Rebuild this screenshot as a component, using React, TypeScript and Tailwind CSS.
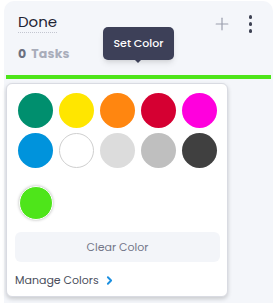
import { ChevronRight, Plus } from 'lucide-react'

const presetColors = [
  '#008f6e', '#ffe600', '#ff8610', '#d50032', '#ff00dd',
  '#0093dc', '#ffffff', '#dcdcdc', '#bfbfbf', '#404040',
]

const App = () => {
  return (
    <div
      className="relative w-[279px] h-[303px] bg-white pl-[4px] pr-[6px] pt-[1px] overflow-hidden"
      style={{ fontFamily: 'Poppins, Inter, "Noto Sans", sans-serif' }}
    >
      <div className="h-[310px] bg-[#f4f6fa] rounded-t-[10px] flex flex-col">
        {/* Header */}
        <div className="flex items-start justify-between pl-[14px] pr-[21px] pt-[11px] h-[74px]">
          <div className="flex flex-col">
            <span className="text-[15px] leading-[20px] text-[#1f2433] border-b border-dotted border-[#c3c6d0] w-fit">
              Done
            </span>
            <span className="mt-[14px] text-[12.5px] leading-[14px] font-bold text-[#a9adba] tracking-[0.2px]">
              <span className="text-[#6c7080] mr-[2px]">0</span> Tasks
            </span>
          </div>
          <div className="flex items-center gap-[17px] pt-[2px]">
            <Plus className="w-[20px] h-[20px] text-[#9a9eac]" strokeWidth={1.4} />
            <div className="flex flex-col gap-[3.5px]">
              <span className="w-[3.5px] h-[3.5px] rounded-full bg-[#3e4253]" />
              <span className="w-[3.5px] h-[3.5px] rounded-full bg-[#3e4253]" />
              <span className="w-[3.5px] h-[3.5px] rounded-full bg-[#3e4253]" />
            </div>
          </div>
        </div>

        {/* Color bar */}
        <div className="mx-[2px] h-[4px] bg-[#4ee51a]" />

        {/* Color picker */}
        <div className="ml-[2px] mt-[4px] w-[222px] h-[214px] bg-white rounded-[6px] border border-[#d9dbe2] shadow-[0_2px_4px_rgba(0,0,0,0.18)] flex flex-col pl-[11px] pr-[7px] pt-[9px]">
          <div className="grid grid-cols-5 gap-x-[6px] gap-y-[5px] w-[199px]">
            {presetColors.map((c) => (
              <span
                key={c}
                className={`w-[35px] h-[35px] rounded-full ${c === '#ffffff' ? 'border border-[#cfcfcf]' : ''}`}
                style={{ backgroundColor: c }}
              />
            ))}
          </div>
          <div className="mt-[18px] pl-[1px]">
            <span className="block w-[34px] h-[34px] rounded-full bg-[#4ee51a] border-[1.5px] border-white shadow-[0_0_3px_rgba(0,0,0,0.3)]" />
          </div>
          <div className="mt-[12px] -ml-[3px] h-[30px] rounded-[6px] bg-[#f3f5f9] flex items-center justify-center text-[11px] text-[#737789]">
            Clear Color
          </div>
          <div className="mt-[10px] -ml-[3px] flex items-center gap-[4px] text-[11px] text-[#4a4e5c]">
            Manage Colors
            <ChevronRight className="w-[13px] h-[13px] text-[#1a8fe0]" strokeWidth={3.5} />
          </div>
        </div>
      </div>

      {/* Tooltip */}
      <div className="absolute left-[103px] top-[27px] w-[71px] h-[33px] rounded-[5px] bg-[#3d4058] flex items-center justify-center text-[11px] font-medium text-white shadow-md">
        Set Color
        <span className="absolute -bottom-[3px] left-[31px] w-0 h-0 border-l-[4px] border-r-[4px] border-t-[4px] border-l-transparent border-r-transparent border-t-[#3d4058]" />
      </div>
    </div>
  )
}

export default App
